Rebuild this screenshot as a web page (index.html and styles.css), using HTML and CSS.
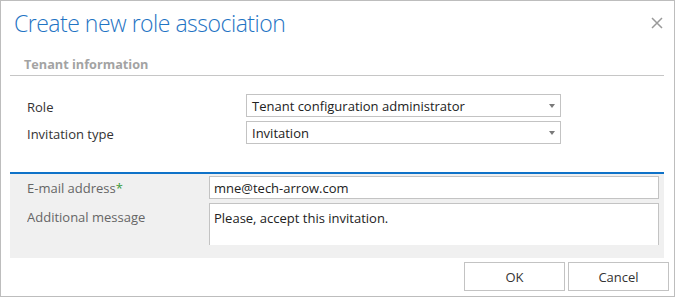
FILE: index.html
```html
<!DOCTYPE html>
<html>
<head>
<meta charset="utf-8">
<link rel="stylesheet" href="styles.css">
</head>
<body>
<div class="dialog">
  <div class="header">
    <h1 class="title">Create new role association</h1>
    <button class="close" aria-label="Close">
      <svg width="12" height="12" viewBox="0 0 12 12"><path d="M1 1L11 11M11 1L1 11" stroke="#9a9a9a" stroke-width="1.5" fill="none"/></svg>
    </button>
  </div>
  <div class="section-head">Tenant information</div>
  <div class="form">
    <div class="row">
      <div class="label">Role</div>
      <div class="select"><span>Tenant configuration administrator</span><i class="arrow"></i></div>
    </div>
    <div class="row">
      <div class="label">Invitation type</div>
      <div class="select"><span>Invitation</span><i class="arrow"></i></div>
    </div>
  </div>
  <div class="panel">
    <div class="panel-scroll">
      <div class="prow">
        <div class="plabel">E-mail address<span class="req">*</span></div>
        <div class="input">mne@tech-arrow.com</div>
      </div>
      <div class="prow">
        <div class="plabel plabel-msg">Additional message</div>
        <div class="textarea">Please, accept this invitation.</div>
      </div>
    </div>
  </div>
  <div class="buttons">
    <button class="btn">OK</button>
    <button class="btn">Cancel</button>
  </div>
</div>
</body>
</html>
```
FILE: styles.css
```css
html, body {
  margin: 0;
  padding: 0;
  background: #fff;
}
body {
  font-family: "Open Sans", "Noto Sans", sans-serif;
  font-size: 13px;
  color: #333;
}
.dialog {
  box-sizing: border-box;
  width: 675px;
  height: 297px;
  border: 1px solid #bdbdbd;
  padding: 0 10px 0 9px;
  display: flex;
  flex-direction: column;
}
.header {
  flex: none;
  height: 48px;
  display: flex;
  align-items: flex-start;
  justify-content: space-between;
}
.title {
  margin: 0;
  padding: 6.5px 0 0 4px;
  font-weight: 300;
  font-size: 23px;
  letter-spacing: -0.5px;
  line-height: 30px;
  color: #1f74c4;
}
.close {
  margin: 16px 1px 0 0;
  padding: 0;
  border: 0;
  background: none;
  width: 12px;
  height: 12px;
  display: flex;
}
.section-head {
  flex: none;
  height: 27px;
  box-sizing: border-box;
  border-bottom: 1px solid #c6c6c6;
  padding: 7px 0 0 14px;
  font-weight: 700;
  font-size: 12.7px;
  line-height: 16px;
  color: #a3a3a3;
}
.form {
  flex: none;
  box-sizing: border-box;
  height: 96px;
  padding: 18px 0 0 17px;
  display: flex;
  flex-direction: column;
  gap: 4px;
}
.row {
  display: flex;
  align-items: center;
  height: 23px;
}
.label {
  width: 219px;
  padding-top: 2px;
  color: #333;
}
.select {
  box-sizing: border-box;
  width: 315px;
  height: 23px;
  border: 1px solid #c3c3c3;
  padding: 1px 5px 0 5px;
  display: flex;
  align-items: center;
  justify-content: space-between;
  color: #222;
}
.arrow {
  width: 0;
  height: 0;
  border-left: 3.5px solid transparent;
  border-right: 3.5px solid transparent;
  border-top: 4px solid #7a7a7a;
  margin-top: -1px;
}
.panel {
  flex: none;
  border-top: 2px solid #0f72c8;
  background: #f0f0f0;
  height: 86px;
  box-sizing: border-box;
  padding: 0 5px 13px 17px;
}
.panel-scroll {
  height: 71px;
  overflow: hidden;
  padding-top: 2px;
  box-sizing: border-box;
  display: flex;
  flex-direction: column;
  gap: 4px;
}
.prow {
  display: flex;
  align-items: flex-start;
  flex: none;
}
.plabel {
  width: 182px;
  color: #666;
  line-height: 22px;
  padding-top: 1px;
}
.plabel-msg {
  padding-top: 3px;
}
.req {
  color: #3a9a3a;
}
.input {
  flex: 1;
  box-sizing: border-box;
  height: 23px;
  border: 1px solid #c3c3c3;
  background: #fff;
  padding: 1px 4px 0;
  line-height: 20px;
  color: #222;
}
.textarea {
  flex: 1;
  box-sizing: border-box;
  height: 60px;
  border: 1px solid #c3c3c3;
  background: #fff;
  padding: 5px 4px;
  line-height: 18px;
  color: #222;
}
.buttons {
  flex: none;
  display: flex;
  justify-content: flex-end;
  gap: 3px;
  padding-top: 4px;
  margin-right: -5px;
}
.btn {
  box-sizing: border-box;
  width: 101px;
  height: 29px;
  border: 1px solid #c3c3c3;
  background: #fff;
  font-family: "Open Sans", "Noto Sans", sans-serif;
  font-size: 13px;
  color: #333;
  padding: 0;
}
```
